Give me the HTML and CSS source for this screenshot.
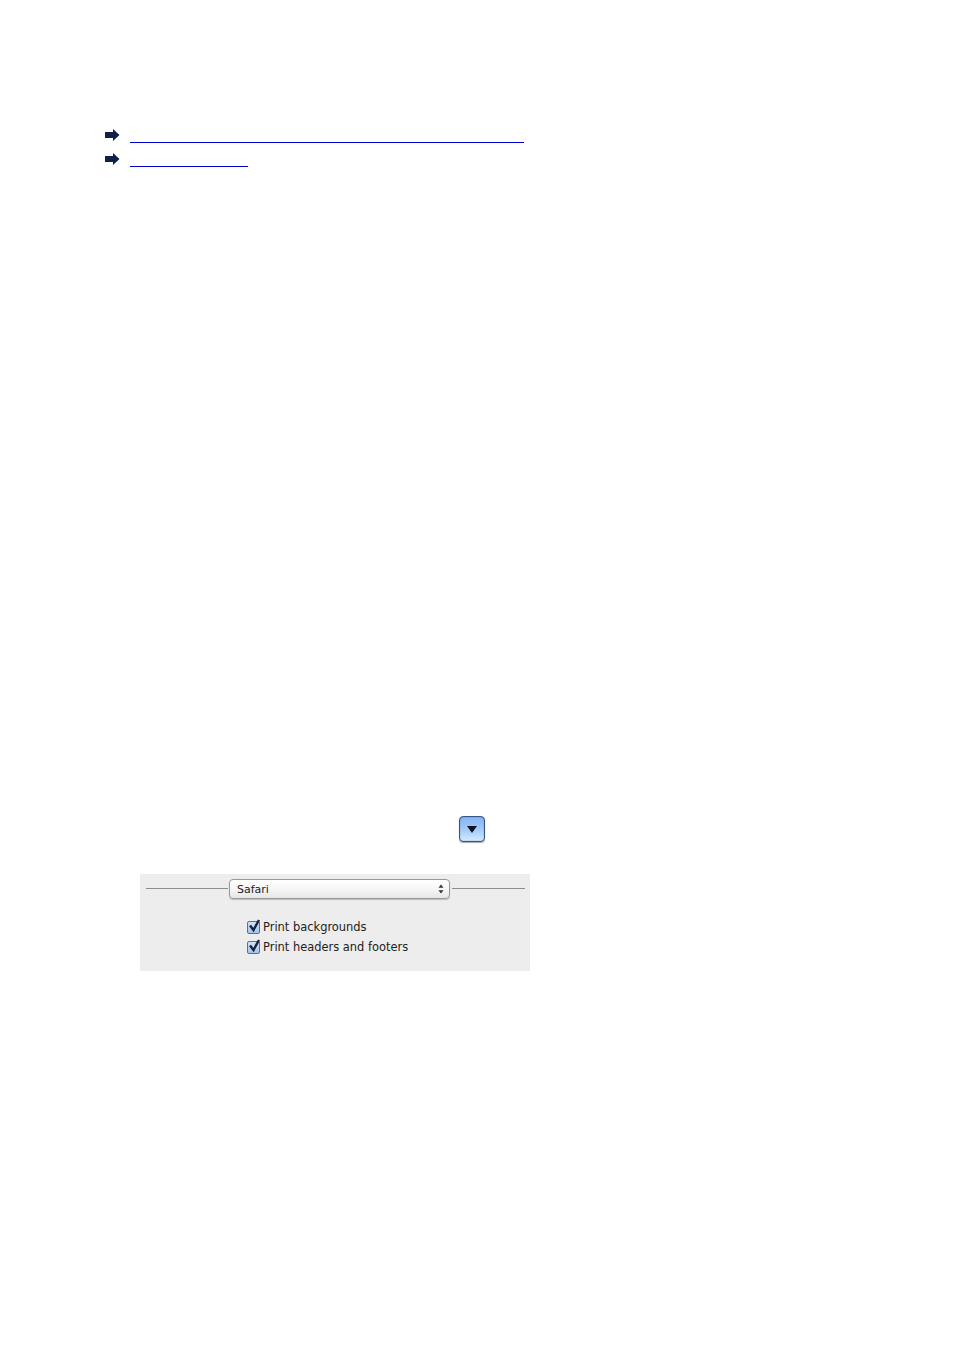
FILE: index.html
```html
<!DOCTYPE html>
<html lang="en">
<head>
    <meta charset="UTF-8">
    <title>Safari print options</title>
    <link rel="stylesheet" href="styles.css">
</head>
<body>
  <div class="page">
    <ul class="links">
        <li>
            <svg class="arrow" width="15" height="12" viewBox="0 0 15 12"><path d="M0 3H8V0L14.5 6L8 12V9H0Z" fill="#10204a"/></svg>
            <a href="#" class="link link-long"></a>
        </li>
        <li>
            <svg class="arrow" width="15" height="12" viewBox="0 0 15 12"><path d="M0 3H8V0L14.5 6L8 12V9H0Z" fill="#10204a"/></svg>
            <a href="#" class="link link-short"></a>
        </li>
    </ul>

    <div class="step">
        <div class="disclosure"><span class="triangle"></span></div>
    </div>

    <div class="panel">
        <div class="select-row">
            <span class="rule rule-left"></span>
            <div class="select">
                <span>Safari</span>
                <svg width="6" height="10" viewBox="0 0 6 10"><path d="M3 0.5L5.5 3.8H0.5ZM3 9.5L0.5 6.2H5.5Z" fill="#333"/></svg>
            </div>
            <span class="rule rule-right"></span>
        </div>
        <div class="options">
            <div class="option">
                <span class="checkbox"><svg width="14" height="14" viewBox="0 0 14 14"><path d="M3 6.5L6.5 11L12 1" fill="none" stroke="#16233f" stroke-width="2.4"/></svg></span>
                <span>Print backgrounds</span>
            </div>
            <div class="option">
                <span class="checkbox"><svg width="14" height="14" viewBox="0 0 14 14"><path d="M3 6.5L6.5 11L12 1" fill="none" stroke="#16233f" stroke-width="2.4"/></svg></span>
                <span>Print headers and footers</span>
            </div>
        </div>
    </div>
  </div>
</body>
</html>
```

FILE: styles.css
```css
body {
    margin: 0;
    background: white;
    font-family: "DejaVu Sans", sans-serif;
    color: #222;
}

.page {
    padding: 128px 0 0 105px;
    height: 1222px;
}

.links {
    list-style: none;
    margin: 0;
    padding: 0;
}

.links li {
    display: flex;
    align-items: flex-start;
    gap: 10px;
    height: 24px;
}

.arrow {
    margin-top: 1px;
}

.link {
    display: block;
    height: 14px;
    border-bottom: 1px solid #0000cc;
}

.link-long {
    width: 394px;
}

.link-short {
    width: 118px;
}

.step {
    padding: 640px 0 0 354px;
}

.disclosure {
    width: 26px;
    height: 26px;
    box-sizing: border-box;
    border: 1px solid #34558c;
    border-radius: 4px;
    background: linear-gradient(#86b3ef, #a5cdf9 55%, #d3e9ff);
    box-shadow: 0 1px 1px #aaa, inset 0 0 1px #2c4a80;
    display: flex;
    align-items: center;
    justify-content: center;
}

.triangle {
    width: 0;
    height: 0;
    border-left: 5px solid transparent;
    border-right: 5px solid transparent;
    border-top: 7px solid #0c1526;
}

.panel {
    margin: 32px 0 0 35px;
    width: 390px;
    height: 97px;
    background: #ededed;
    box-sizing: border-box;
    padding: 5px 5px 0 6px;
}

.select-row {
    display: flex;
    align-items: center;
}

.rule {
    height: 1px;
    margin-top: -2px;
    background: #8c8c8c;
}

.rule-left {
    width: 82px;
}

.rule-right {
    flex: 1;
}

.select {
    width: 221px;
    height: 20px;
    margin: 0 2px 0 1px;
    box-sizing: border-box;
    border: 1px solid #999;
    border-radius: 4px;
    background: linear-gradient(white, #f6f6f6 50%, #e6e6e6);
    box-shadow: 0 1px 1px #bbb;
    display: flex;
    align-items: center;
    justify-content: space-between;
    padding: 0 5px 0 7px;
    font-size: 11px;
}

.options {
    margin: 18px 0 0 101px;
}

.option {
    display: flex;
    align-items: center;
    gap: 3px;
    height: 20px;
    font-size: 11.45px;
}

.checkbox {
    width: 13px;
    height: 13px;
    box-sizing: border-box;
    border: 1px solid #5b6f8e;
    border-radius: 2px;
    background: linear-gradient(#d2e2f6, #a3c4ec);
    display: flex;
    align-items: center;
    justify-content: center;
}

.checkbox svg {
    flex: none;
    margin-top: -3px;
}
```
